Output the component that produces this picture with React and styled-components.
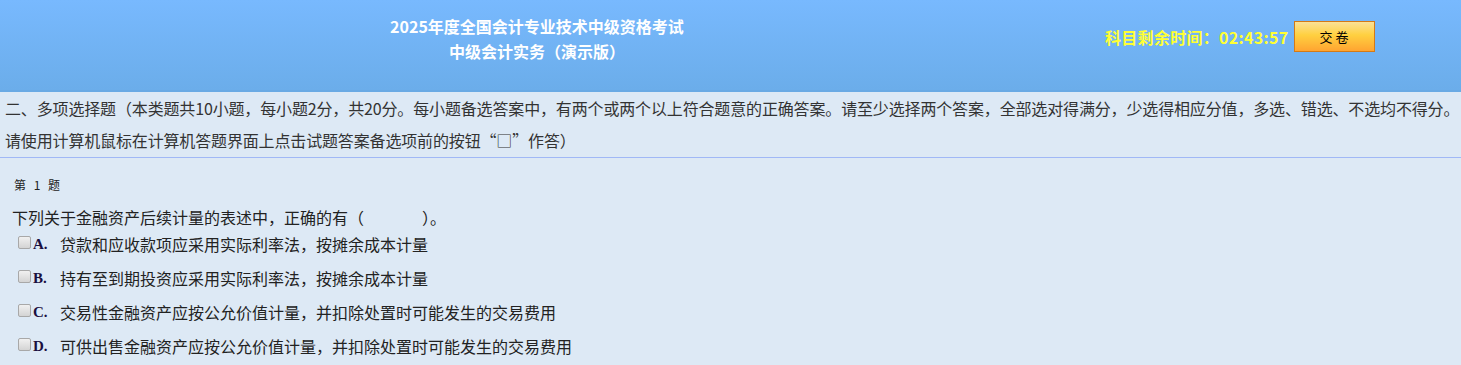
import React from "react";
import styled, { createGlobalStyle } from "styled-components";

const GlobalStyle = createGlobalStyle`
  html, body {
    margin: 0;
    padding: 0;
    background: #dde9f5;
    font-family: "Liberation Sans", "Noto Sans CJK SC", sans-serif;
  }
`;

const options = [
  { key: "A", text: "贷款和应收款项应采用实际利率法，按摊余成本计量" },
  { key: "B", text: "持有至到期投资应采用实际利率法，按摊余成本计量" },
  { key: "C", text: "交易性金融资产应按公允价值计量，并扣除处置时可能发生的交易费用" },
  { key: "D", text: "可供出售金融资产应按公允价值计量，并扣除处置时可能发生的交易费用" },
];

const App = () => {
  return (
    <>
      <GlobalStyle />
      <Page>
        <Header>
          <Title>
            <TitleLine>2025年度全国会计专业技术中级资格考试</TitleLine>
            <TitleLine>中级会计实务（演示版）</TitleLine>
          </Title>
          <TimerBox>
            <Timer>科目剩余时间：02:43:57</Timer>
            <SubmitButton>交 卷</SubmitButton>
          </TimerBox>
        </Header>

        <Notice>
          <NoticeLine>
            二、多项选择题（本类题共10小题，每小题2分，共20分。每小题备选答案中，有两个或两个以上符合题意的正确答案。请至少选择两个答案，全部选对得满分，少选得相应分值，多选、错选、不选均不得分。
          </NoticeLine>
          <NoticeLine>请使用计算机鼠标在计算机答题界面上点击试题答案备选项前的按钮“□”作答）</NoticeLine>
        </Notice>

        <Question>
          <QuestionNo>第 1 题</QuestionNo>
          <Stem>下列关于金融资产后续计量的表述中，正确的有（<Blank />）。</Stem>
          <OptionList>
            {options.map((o) => (
              <Option key={o.key}>
                <Box />
                <Letter>{o.key}.</Letter>
                <OptionText>{o.text}</OptionText>
              </Option>
            ))}
          </OptionList>
        </Question>
      </Page>
    </>
  );
};

const Page = styled.div`
  width: 1461px;
  min-height: 365px;
  background: #dde9f5;
  color: #333;
`;

const Header = styled.div`
  height: 90px;
  border-bottom: 2px solid #6aaae4;
  background: linear-gradient(to bottom, #78b9fe, #6badea);
  display: flex;
`;

const Title = styled.div`
  width: 1074px;
  padding-top: 14px;
  text-align: center;
  color: #fff;
  font-family: "Noto Sans CJK SC", sans-serif;
  font-weight: bold;
  font-size: 16px;
`;

const TitleLine = styled.div`
  line-height: 25px;
`;

const TimerBox = styled.div`
  display: flex;
  align-items: flex-start;
  padding-left: 31px;
  padding-top: 21px;
  gap: 5px;
`;

const Timer = styled.div`
  color: #ffff33;
  font-family: "Noto Sans CJK SC", sans-serif;
  font-weight: bold;
  font-size: 16px;
  line-height: 32px;
  letter-spacing: 0.3px;
  white-space: nowrap;
`;

const SubmitButton = styled.div`
  width: 79px;
  height: 29px;
  border: 1px solid #d47a16;
  background: linear-gradient(to bottom, #fbe196, #ffd040 45%, #ffa431);
  color: #000;
  font-family: "Noto Sans CJK SC", sans-serif;
  font-size: 13px;
  line-height: 29px;
  text-align: center;
`;

const Notice = styled.div`
  padding: 0 0 1px 5px;
  border-bottom: 1px solid #a0b8f6;
  font-family: "Noto Sans CJK SC", sans-serif;
  font-size: 16px;
  color: #333;
`;

const NoticeLine = styled.div`
  line-height: 32px;
  white-space: nowrap;
  letter-spacing: -0.15px;
`;

const Question = styled.div`
  padding: 17px 0 0 12px;
`;

const QuestionNo = styled.div`
  padding-left: 2px;
  font-family: "Noto Sans CJK SC", sans-serif;
  font-size: 12px;
  line-height: 20px;
  word-spacing: 5px;
  color: #222;
`;

const Stem = styled.div`
  margin-top: 12px;
  font-family: "Noto Sans CJK SC", sans-serif;
  font-size: 16px;
  line-height: 20px;
  color: #222;
`;

const Blank = styled.span`
  display: inline-block;
  width: 58px;
`;

const OptionList = styled.div`
  display: flex;
  flex-direction: column;
`;

const Option = styled.div`
  display: flex;
  align-items: center;
  height: 34px;
  padding-left: 6px;
`;

const Box = styled.span`
  width: 11px;
  height: 11px;
  border: 1px solid #a8a8a8;
  border-radius: 2px;
  background: linear-gradient(to bottom, #f0f0f0, #d4d4d4);
  margin-right: 2px;
  margin-top: -3px;
`;

const Letter = styled.span`
  font-family: "Liberation Serif", serif;
  font-weight: bold;
  font-size: 15px;
  color: #1a1040;
  width: 27px;
`;

const OptionText = styled.span`
  font-family: "Noto Sans CJK SC", sans-serif;
  font-size: 16px;
  color: #222;
`;

export default App;
